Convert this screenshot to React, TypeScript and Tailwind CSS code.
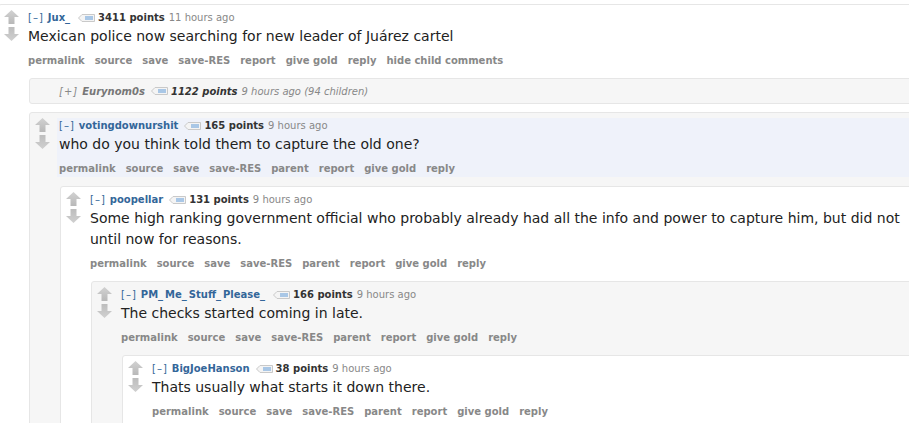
import React from 'react'

const Arrow = ({ down }: { down?: boolean }) => (
  <svg width="15" height="14" viewBox="0 0 15 14" className="block">
    <defs>
      <linearGradient id={down ? 'gd' : 'gu'} x1="0" y1="0" x2="0" y2="1">
        <stop offset="0" stopColor={down ? '#bdbdbd' : '#d2d2d2'} />
        <stop offset="1" stopColor={down ? '#d0d0d0' : '#b8b8b8'} />
      </linearGradient>
    </defs>
    <path
      d={down ? 'M7.5 14 L15 7 L10.5 7 L10.5 0 L4.5 0 L4.5 7 L0 7 Z' : 'M7.5 0 L15 7 L10.5 7 L10.5 14 L4.5 14 L4.5 7 L0 7 Z'}
      fill={`url(#${down ? 'gd' : 'gu'})`}
    />
  </svg>
)

const Tag = () => (
  <svg width="17" height="8" viewBox="0 0 17 8" className="block">
    <path d="M0.5 4 L4 0.5 H16.5 V7.5 H4 Z" fill="#f4f4f4" stroke="#c9c9c9" />
    <rect x="7" y="2" width="8" height="4" fill="#a9c7e6" />
  </svg>
)

// verdana's underscore is wider than dejavu's
const Name = ({ name }: { name: string }) => (
  <>
    {name.split('_').map((part, i) => (
      <React.Fragment key={i}>
        {i > 0 && <span className="mr-[2px]">_</span>}
        {part}
      </React.Fragment>
    ))}
  </>
)

type Props = {
  author: string
  points: string
  time: string
  body: React.ReactNode
  buttons: string[]
  bg?: string
  highlight?: boolean
  children?: React.ReactNode
}

const Comment = ({ author, points, time, body, buttons, bg, highlight, children }: Props) => (
  <div className={`rounded-[3px] border border-[#e6e6e6] pb-[10px] ${bg ?? 'bg-white'}`}>
    <div className="flex pt-[5px]">
      <div className="ml-[5px] flex w-[15px] flex-col gap-[3px]">
        <Arrow />
        <Arrow down />
      </div>
      <div className={`ml-[7px] flex-1 pl-[2px] ${highlight ? 'bg-[#eff2fa]' : ''}`}>
        <div className="flex h-[13px] items-center whitespace-nowrap pt-[2px] text-[10px] leading-[12px] text-[#888]">
          <span className="tracking-[1px] text-[#369]">[–]</span>
          <span className="ml-[4px] font-bold text-[#369]">
            <Name name={author} />
          </span>
          <span className="ml-[6px]">
            <Tag />
          </span>
          <span className="ml-[3px] font-bold text-[#333]">{points}</span>
          <span className="ml-[4px]">{time}</span>
        </div>
        <div className="mt-[3px] text-[14px] leading-[21px] text-[#222]">{body}</div>
        <div className="mt-[6px] flex h-[16px] gap-[10px] whitespace-nowrap text-[10px] font-bold leading-[16px] text-[#888]">
          {buttons.map((b) => (
            <span key={b}>{b}</span>
          ))}
        </div>
      </div>
    </div>
    {children && <div className="ml-[30px] mt-[9px] flex flex-col gap-[8px]">{children}</div>}
  </div>
)

const base = ['permalink', 'source', 'save', 'save-RES', 'parent', 'report', 'give gold', 'reply']

export default function App() {
  return (
    <div className="h-[423px] w-[909px] overflow-hidden bg-white font-['DejaVu_Sans','Liberation_Sans',sans-serif]">
      <div className="ml-[-2px] mt-[4px] w-[960px]">
        <Comment
          author="Jux_"
          points="3411 points"
          time="11 hours ago"
          body="Mexican police now searching for new leader of Juárez cartel"
          buttons={['permalink', 'source', 'save', 'save-RES', 'report', 'give gold', 'reply', 'hide child comments']}
        >
          <div className="flex h-[26px] items-center whitespace-nowrap rounded-[3px] border border-[#e6e6e6] bg-[#f6f6f6] pl-[29px] text-[10px] italic text-[#888]">
            <span className="tracking-[1px]">[+]</span>
            <span className="ml-[4px] font-bold text-[#777]">Eurynom0s</span>
            <span className="ml-[6px]">
              <Tag />
            </span>
            <span className="ml-[3px] font-bold text-[#333]">1122 points</span>
            <span className="ml-[4px]">9 hours ago (94 children)</span>
          </div>
          <Comment
            author="votingdownurshit"
            points="165 points"
            time="9 hours ago"
            body="who do you think told them to capture the old one?"
            buttons={base}
            bg="bg-[#f6f6f6]"
            highlight
          >
            <Comment
              author="poopellar"
              points="131 points"
              time="9 hours ago"
              body={
                <>
                  Some high ranking government official who probably already had all the info and power to capture him, but did not
                  <br />
                  until now for reasons.
                </>
              }
              buttons={base}
            >
              <Comment
                author="PM_Me_Stuff_Please_"
                points="166 points"
                time="9 hours ago"
                body="The checks started coming in late."
                buttons={base}
                bg="bg-[#f6f6f6]"
              >
                <Comment
                  author="BigJoeHanson"
                  points="38 points"
                  time="9 hours ago"
                  body="Thats usually what starts it down there."
                  buttons={base}
                />
              </Comment>
            </Comment>
          </Comment>
        </Comment>
      </div>
    </div>
  )
}
